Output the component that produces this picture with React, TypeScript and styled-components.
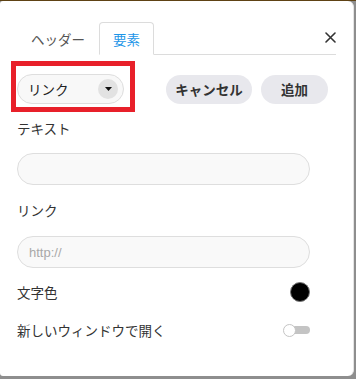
import React from "react";
import styled, { createGlobalStyle } from "styled-components";

const Global = createGlobalStyle`
  html, body { margin: 0; padding: 0; }
  body {
    width: 356px;
    height: 379px;
    overflow: hidden;
    background: linear-gradient(to bottom, #5e4214 0, #5e4214 1px, #8e8e8e 1px);
    font-family: "Noto Sans CJK JP", "Noto Sans", sans-serif;
  }
`;

const Panel = styled.div`
  position: relative;
  box-sizing: border-box;
  margin-top: 1px;
  width: 354px;
  height: 375px;
  background: #fff;
  border-radius: 3px 6px 6px 3px;
  border-right: 1px solid #e4e4e4;
  padding: 20px 17px 0 17px;
`;

const TabBar = styled.div`
  display: flex;
  align-items: flex-end;
  height: 33px;
  border-bottom: 1px solid #dcdcdc;
`;

const Tab = styled.div<{ $active?: boolean }>`
  box-sizing: border-box;
  height: 33px;
  margin-bottom: -1px;
  padding: 0 13px;
  display: flex;
  align-items: center;
  font-size: 13.5px;
  color: ${(p) => (p.$active ? "#1e96e8" : "#555")};
  background: #fff;
  border: 1px solid ${(p) => (p.$active ? "#dcdcdc" : "transparent")};
  border-bottom-color: ${(p) => (p.$active ? "#fff" : "transparent")};
  border-radius: 4px 4px 0 0;
`;

const Close = styled.button`
  margin-left: auto;
  align-self: center;
  width: 11px;
  height: 11px;
  padding: 0;
  border: 0;
  background: transparent;
  display: flex;
  align-items: center;
  justify-content: center;
`;

const Toolbar = styled.div`
  position: relative;
  display: flex;
  align-items: center;
  margin-top: 19px;
  margin-right: 8px;
  height: 30px;
`;

const Highlight = styled.div`
  position: absolute;
  left: -6px;
  top: -13px;
  width: 124px;
  height: 51px;
  box-sizing: border-box;
  border: 5px solid #e8202a;
  pointer-events: none;
`;

const Select = styled.div`
  box-sizing: border-box;
  width: 107px;
  height: 30px;
  display: flex;
  align-items: center;
  padding: 0 5px 0 10px;
  border: 1px solid #dedede;
  border-radius: 15px;
  background: #f8f8f8;
  font-size: 13.5px;
  color: #222;
`;

const Caret = styled.span`
  margin-left: auto;
  width: 20px;
  height: 20px;
  border-radius: 50%;
  background: #e2e2e2;
  display: flex;
  align-items: center;
  justify-content: center;
`;

const Buttons = styled.div`
  margin-left: auto;
  display: flex;
  gap: 9px;
`;

const Button = styled.button<{ $w: number }>`
  box-sizing: border-box;
  width: ${(p) => p.$w}px;
  height: 29px;
  border: 0;
  border-radius: 15px;
  background: #e8e8ed;
  font-family: "Noto Sans CJK JP", "Noto Sans", sans-serif;
  font-weight: 700;
  font-size: 13.5px;
  color: #333;
  padding: 0;
`;

const Form = styled.div`
  margin-right: 26px;
  display: flex;
  flex-direction: column;
`;

const Label = styled.div<{ $top: number }>`
  margin-top: ${(p) => p.$top}px;
  height: 20px;
  line-height: 20px;
  font-size: 13.5px;
  color: #333;
`;

const Input = styled.input<{ $top: number }>`
  box-sizing: border-box;
  margin-top: ${(p) => p.$top}px;
  width: 100%;
  height: 32px;
  border: 1px solid #dedede;
  border-radius: 16px;
  background: #f9f9f9;
  padding: 0 11px;
  font-family: "Liberation Sans", "Noto Sans", sans-serif;
  font-size: 13px;
  color: #333;
  outline: none;
  &::placeholder { color: #a8a8a8; }
`;

const Row = styled.div<{ $top: number }>`
  margin-top: ${(p) => p.$top}px;
  height: 24px;
  display: flex;
  align-items: center;
  justify-content: space-between;
  font-size: 13.5px;
  color: #333;
`;

const Swatch = styled.span`
  box-sizing: border-box;
  width: 20px;
  height: 20px;
  border-radius: 50%;
  background: #000;
  border: 1px solid #777;
`;

const Toggle = styled.span`
  position: relative;
  width: 27px;
  height: 13px;
  display: flex;
  align-items: center;
`;

const Track = styled.span`
  margin-left: 6px;
  width: 21px;
  height: 8px;
  border-radius: 4px;
  background: #c4c4c4;
`;

const Knob = styled.span`
  position: absolute;
  left: 0;
  top: 0;
  box-sizing: border-box;
  width: 13px;
  height: 13px;
  border-radius: 50%;
  background: #fff;
  border: 1px solid #c4c4c4;
`;

export default function App() {
  return (
    <>
      <Global />
      <Panel>
        <TabBar>
          <Tab>ヘッダー</Tab>
          <Tab $active>要素</Tab>
          <Close aria-label="close">
            <svg width="11" height="11" viewBox="0 0 11 11">
              <path d="M1 1L10 10M10 1L1 10" stroke="#333" strokeWidth="1.6" strokeLinecap="round" />
            </svg>
          </Close>
        </TabBar>
        <Toolbar>
          <Select>
            リンク
            <Caret>
              <svg width="7" height="4" viewBox="0 0 7 4">
                <path d="M0 0H7L3.5 4Z" fill="#111" />
              </svg>
            </Caret>
          </Select>
          <Highlight />
          <Buttons>
            <Button $w={86}>キャンセル</Button>
            <Button $w={67}>追加</Button>
          </Buttons>
        </Toolbar>
        <Form>
          <Label $top={14}>テキスト</Label>
          <Input $top={15} />
          <Label $top={15}>リンク</Label>
          <Input $top={16} placeholder="http://" />
          <Row $top={12}>
            文字色
            <Swatch />
          </Row>
          <Row $top={14}>
            新しいウィンドウで開く
            <Toggle>
              <Track />
              <Knob />
            </Toggle>
          </Row>
        </Form>
      </Panel>
    </>
  );
}
